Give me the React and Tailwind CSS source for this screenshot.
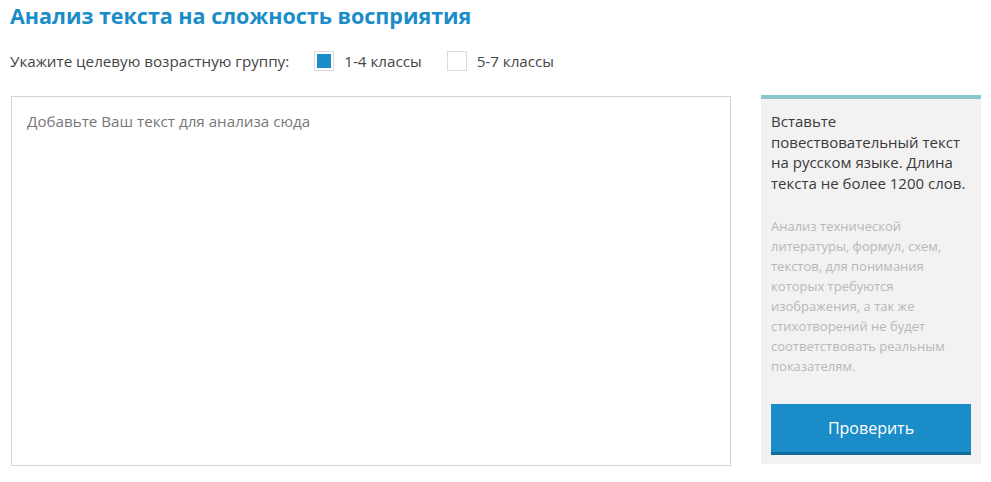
import { useState } from "react";

export default function App() {
  const [group, setGroup] = useState("1-4");
  const [text, setText] = useState("");

  const box = (value, label) => (
    <label className="flex items-center cursor-pointer" onClick={() => setGroup(value)}>
      <span className="flex h-[20px] w-[20px] items-center justify-center border border-[#dcdcdc] bg-white">
        {group === value && <span className="h-[14px] w-[14px] bg-[#1a8cc8]" />}
      </span>
      <span className="ml-[10px]">{label}</span>
    </label>
  );

  return (
    <div className="h-[482px] w-[991px] bg-white font-['Open_Sans',sans-serif] text-[#444]">
      <h1 className="pl-[10px] pt-[1px] text-[21.5px] font-bold leading-[30px] text-[#1a8cc8]">
        Анализ текста на сложность восприятия
      </h1>

      <div className="mt-[19px] flex items-center pl-[10px] text-[15.2px] leading-[22px]">
        <span>Укажите целевую возрастную группу:</span>
        <div className="ml-[25px] flex items-center gap-[25px]">
          {box("1-4", "1-4 классы")}
          {box("5-7", "5-7 классы")}
        </div>
      </div>

      <div className="mt-[23px] flex items-start pl-[11px]">
        <textarea
          value={text}
          onChange={(e) => setText(e.target.value)}
          placeholder="Добавьте Ваш текст для анализа сюда"
          className="mt-[1px] h-[370px] w-[720px] resize-none border border-[#d4d4d4] px-[15px] py-[14px] text-[15.2px] leading-[20px] text-[#444] outline-none placeholder:text-[#777]"
        />

        <div className="ml-[30px] flex h-[369px] w-[220px] flex-col border-t-[4px] border-[#8ac6cc] bg-[#f2f2f2] px-[10px]">
          <p className="mt-[12px] text-[15px] leading-[20.5px] text-[#3a3a3a]">
            Вставьте повествовательный текст на русском языке. Длина текста не более 1200 слов.
          </p>
          <p className="mt-[23px] text-[13px] leading-[20px] text-[#b8b8b8]">
            Анализ технической литературы, формул, схем, текстов, для понимания которых требуются изображения, а так же стихотворений не будет соответствовать реальным показателям.
          </p>
          <button className="mt-auto mb-[9px] h-[51px] w-[200px] border-b-[3px] border-[#0f6c9c] bg-[#1a8cc8] text-[16px] text-white">
            Проверить
          </button>
        </div>
      </div>
    </div>
  );
}
